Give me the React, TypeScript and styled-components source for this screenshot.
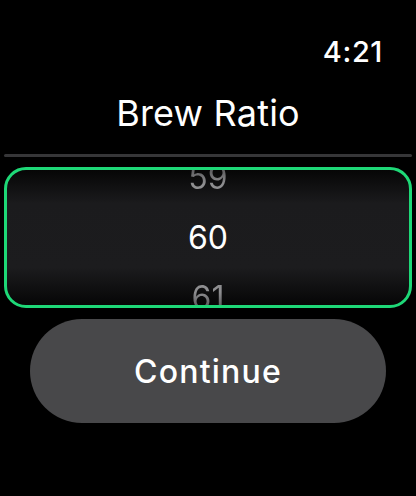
import styled, { createGlobalStyle } from "styled-components";

const GlobalStyle = createGlobalStyle`
	html, body {
		margin:0;
		padding:0;
		background:#000;
	}
	body {
		font-family:Inter, "Noto Sans", "Liberation Sans", sans-serif;
		color:#fff;
	}
`;

export const Screen = styled.div`
	width:416px;
	height:496px;
	box-sizing:border-box;
	padding:0 4px;
	background:#000;
	display:flex;
	flex-direction:column;
	overflow:hidden;
`;

export const StatusBar = styled.div`
	display:flex;
	justify-content:flex-end;
	padding:35px 29px 0 0;
`;

export const Time = styled.span`
	font-size:29px;
	line-height:34px;
	font-weight:500;
	letter-spacing:0.6px;
`;

export const Title = styled.h1`
	margin:22px 0 0;
	text-align:center;
	font-size:36px;
	line-height:44px;
	font-weight:400;
	letter-spacing:0.2px;
`;

export const Divider = styled.div`
	margin-top:19px;
	height:3px;
	border-radius:2px;
	background:#363638;
`;

export const Picker = styled.div`
	margin-top:10px;
	height:141px;
	box-sizing:border-box;
	border:3px solid #1ed877;
	border-radius:22px;
	background:linear-gradient(
		to bottom,
		#060606 0%,
		#1b1b1d 25%,
		#1c1c1e 72%,
		#060606 100%
	);
	display:flex;
	flex-direction:column;
	justify-content:center;
	align-items:center;
	overflow:hidden;
`;

export const PickerItem = styled.div<{ $dim?: "up" | "down" }>`
	flex:0 0 auto;
	height:60px;
	line-height:60px;
	font-size:32px;
	font-weight:400;
	color:#fff;
	${({ $dim }) =>
		$dim &&
		`
		color:transparent;
		background:linear-gradient(${$dim === "up" ? "to top" : "to bottom"}, #8e8e90 40%, #3a3a3c 80%);
		-webkit-background-clip:text;
		background-clip:text;
	`}
`;

export const ContinueButton = styled.button`
	margin:11px auto 0;
	width:356px;
	height:104px;
	border:none;
	border-radius:52px;
	background:#48484a;
	color:#fff;
	font-family:inherit;
	font-size:32px;
	font-weight:500;
	letter-spacing:1.2px;
	cursor:pointer;
`;

export default function App() {
	const value = 60;

	return (
		<>
			<GlobalStyle />
			<Screen>
				<StatusBar>
					<Time>4:21</Time>
				</StatusBar>
				<Title>Brew Ratio</Title>
				<Divider />
				<Picker>
					<PickerItem $dim="up">{value - 1}</PickerItem>
					<PickerItem>{value}</PickerItem>
					<PickerItem $dim="down">{value + 1}</PickerItem>
				</Picker>
				<ContinueButton>Continue</ContinueButton>
			</Screen>
		</>
	);
}
